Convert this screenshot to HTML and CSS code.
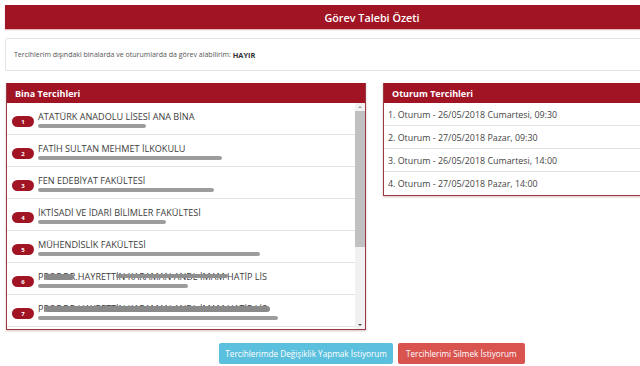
FILE: index.html
```html
<!DOCTYPE html>
<html lang="tr">
<head>
<meta charset="utf-8">
<title>Görev Talebi Özeti</title>
<link rel="stylesheet" href="styles.css">
</head>
<body>
<div class="page">
  <div class="title-bar">Görev Talebi Özeti</div>
  <div class="info">Tercihlerim dışındaki binalarda ve oturumlarda da görev alabilirim:&nbsp;<b>HAYIR</b></div>
  <div class="cols">
    <div class="panel panel-left">
      <div class="panel-head">Bina Tercihleri</div>
      <div class="list">
        <div class="items">
          <div class="item">
            <span class="badge">1</span>
            <div class="item-body"><div class="item-title">ATATÜRK ANADOLU LİSESİ ANA BİNA</div><div class="scribble" style="width:108px"></div></div>
          </div>
          <div class="item">
            <span class="badge">2</span>
            <div class="item-body"><div class="item-title">FATİH SULTAN MEHMET İLKOKULU</div><div class="scribble" style="width:184px"></div></div>
          </div>
          <div class="item">
            <span class="badge">3</span>
            <div class="item-body"><div class="item-title">FEN EDEBİYAT FAKÜLTESİ</div><div class="scribble" style="width:176px"></div></div>
          </div>
          <div class="item">
            <span class="badge">4</span>
            <div class="item-body"><div class="item-title">İKTİSADİ VE İDARİ BİLİMLER FAKÜLTESİ</div><div class="scribble" style="width:128px"></div></div>
          </div>
          <div class="item">
            <span class="badge">5</span>
            <div class="item-body"><div class="item-title">MÜHENDİSLİK FAKÜLTESİ</div><div class="scribble" style="width:222px"></div></div>
          </div>
          <div class="item">
            <span class="badge">6</span>
            <div class="item-body"><div class="item-title">PROF.DR.HAYRETTİN KARAMAN ANDL İMAM HATİP LİS<span class="cover" style="left:6px;width:30px"></span><span class="cover thin" style="left:78px;width:112px"></span></div><div class="scribble" style="width:150px"></div></div>
          </div>
          <div class="item">
            <span class="badge">7</span>
            <div class="item-body"><div class="item-title">PROF.DR.HAYRETTİN KARAMAN ANDL İMAM HATİP LİS<span class="cover" style="left:6px;width:226px"></span></div><div class="scribble" style="width:240px"></div></div>
          </div>
        </div>
        <div class="sbar">
          <span class="sbar-up"></span>
          <span class="sbar-thumb"></span>
          <span class="sbar-space"></span>
          <span class="sbar-down"></span>
        </div>
      </div>
    </div>
    <div class="panel panel-right">
      <div class="panel-head">Oturum Tercihleri</div>
      <div class="session">1. Oturum - 26/05/2018 Cumartesi, 09:30</div>
      <div class="session">2. Oturum - 27/05/2018 Pazar, 09:30</div>
      <div class="session">3. Oturum - 26/05/2018 Cumartesi, 14:00</div>
      <div class="session">4. Oturum - 27/05/2018 Pazar, 14:00</div>
    </div>
  </div>
  <div class="actions">
    <button class="btn btn-info">Tercihlerimde Değişiklik Yapmak İstiyorum</button>
    <button class="btn btn-danger">Tercihlerimi Silmek İstiyorum</button>
  </div>
</div>
</body>
</html>
```
FILE: styles.css
```css
html, body {
  margin: 0;
  padding: 0;
  background: #fff;
  overflow: hidden;
}
body {
  font-family: "Open Sans", "DejaVu Sans", sans-serif;
  color: #444;
}
.page {
  width: 734px;
  padding: 5px 0 0 5px;
}
.title-bar {
  height: 24px;
  background: #a01424;
  color: #fff;
  font-size: 10.8px;
  font-weight: 600;
  display: flex;
  align-items: center;
  justify-content: center;
  box-shadow: 0 1px 1px rgba(160, 20, 36, 0.3);
}
.info {
  margin-top: 9px;
  height: 31px;
  border: 1px solid #e3e3e3;
  border-radius: 2px;
  display: flex;
  align-items: center;
  padding-left: 8px;
  font-size: 7px;
  color: #555;
}
.info b {
  color: #333;
  font-weight: 700;
  font-size: 7.4px;
}
.cols {
  margin-top: 12px;
  display: grid;
  grid-template-columns: 360px 358px;
  column-gap: 17px;
  align-items: start;
  padding-left: 1px;
}
.panel {
  border: 1px solid #9a3a42;
  border-top: none;
  box-shadow: 0 1px 2px rgba(120, 40, 50, 0.3);
}
.panel-head {
  height: 20px;
  background: #a01424;
  color: #fff;
  font-size: 9px;
  font-weight: 700;
  display: flex;
  align-items: center;
  padding-left: 8px;
}
.list {
  height: 226px;
  display: flex;
}
.items {
  flex: 1;
  overflow: hidden;
}
.sbar {
  width: 10px;
  flex: none;
  background: #f1f1f1;
  display: flex;
  flex-direction: column;
  align-items: stretch;
}
.sbar-up, .sbar-down {
  height: 8px;
  flex: none;
  position: relative;
}
.sbar-up::after, .sbar-down::after {
  content: "";
  position: absolute;
  left: 3px;
  border-left: 2px solid transparent;
  border-right: 2px solid transparent;
}
.sbar-up::after {
  top: 3px;
  border-bottom: 2px solid #a3a3a3;
}
.sbar-down::after {
  top: 3px;
  border-top: 2px solid #505050;
}
.sbar-thumb {
  height: 136px;
  flex: none;
  background: #c1c1c1;
}
.sbar-space {
  flex: 1;
}
.item {
  height: 32px;
  border-bottom: 1px solid #e2e2e2;
  display: flex;
  align-items: flex-start;
  box-sizing: border-box;
  padding-top: 8px;
}
.badge {
  margin: 5px 0 0 5px;
  width: 22px;
  height: 11px;
  border-radius: 6px;
  background: #a01424;
  color: #fff;
  font-size: 6px;
  font-weight: 700;
  display: flex;
  align-items: center;
  justify-content: center;
  flex: none;
}
.item-body {
  margin-left: 4px;
}
.item-title {
  position: relative;
  font-size: 9.1px;
  line-height: 12px;
  color: #3c3c3c;
  white-space: nowrap;
}
.cover {
  position: absolute;
  top: 3px;
  height: 6px;
  background: #8a8a8a;
  border-radius: 3px;
}
.cover.thin {
  top: 3px;
  height: 4px;
  background: #8f8f8f;
}
.scribble {
  margin-top: 1px;
  height: 4px;
  background: #8c8c8c;
  border-radius: 2px;
  opacity: 0.85;
}
.session {
  height: 23px;
  box-sizing: border-box;
  border-bottom: 1px solid #e2e2e2;
  display: flex;
  align-items: center;
  padding-left: 4px;
  font-size: 8.9px;
  color: #444;
}
.session:last-child {
  border-bottom: none;
}
.actions {
  margin-top: 13px;
  display: flex;
  justify-content: center;
  gap: 5px;
}
.btn {
  border: none;
  border-radius: 2px;
  height: 21px;
  padding: 0 6px;
  color: #fff;
  font-family: "Open Sans", "DejaVu Sans", sans-serif;
  font-size: 8.2px;
}
.btn-info {
  background: #5bc0de;
}
.btn-danger {
  background: #d9534f;
  padding: 0 8px;
}
```
